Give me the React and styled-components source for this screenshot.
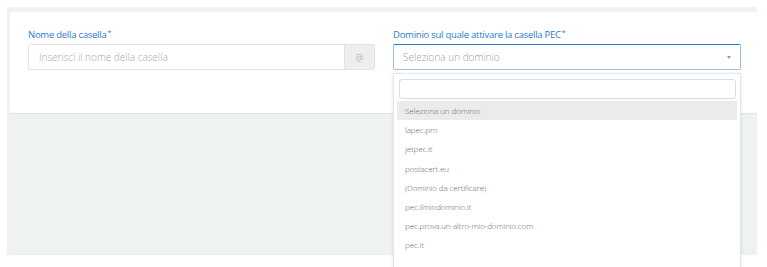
import React from "react";
import styled, { createGlobalStyle } from "styled-components";

const Global = createGlobalStyle`
  html, body { margin: 0; padding: 0; background: #fff; }
  body { font-family: "Open Sans", "Liberation Sans", sans-serif; overflow: hidden; }
  * { box-sizing: border-box; }
`;

const Page = styled.div`
  padding: 7px 10px 0 7px;
  height: 267px;
  overflow: hidden;
`;

const Shell = styled.div`
  background: #eef2f3;
  height: 248px;
  padding: 5px 0 0 3px;
`;

const Card = styled.div`
  background: #fff;
  height: 101px;
  border-radius: 2px;
  box-shadow: 0 1px 1px rgba(0, 0, 0, 0.06);
  padding: 14px 16px 0 18px;
  display: grid;
  grid-template-columns: 347px 348px;
  column-gap: 18px;
  align-items: start;
`;

const Field = styled.div`
  position: relative;
  display: flex;
  flex-direction: column;
`;

const Label = styled.label`
  font-size: 9.5px;
  color: #2b7bd0;
  height: 14px;
  line-height: 14px;
  margin-bottom: 4px;
  letter-spacing: -0.25px;
  sup { font-size: 7px; vertical-align: 3px; margin-left: 1px; }
`;

const InputGroup = styled.div`
  display: flex;
  height: 26px;
  border: 1px solid #e3e3e3;
  border-radius: 2px;
  overflow: hidden;
`;

const TextInput = styled.input`
  flex: 1;
  border: none;
  outline: none;
  padding: 0 10px;
  font-family: inherit;
  font-size: 10px;
  font-weight: 300;
  color: #555;
  &::placeholder { color: #a8a8a8; }
`;

const Addon = styled.span`
  width: 30px;
  background: #eeeeee;
  border-left: 1px solid #e3e3e3;
  display: flex;
  align-items: center;
  justify-content: center;
  font-size: 9px;
  font-weight: 300;
  color: #999;
`;

const SelectBox = styled.div`
  height: 26px;
  border: 1px solid #9ec0e6;
  border-top-color: #2b78cf;
  border-radius: 2px;
  display: flex;
  align-items: center;
  justify-content: space-between;
  padding: 0 9px 0 9px;
  font-size: 10px;
  font-weight: 300;
  color: #a0a0a0;
`;

const Caret = styled.span`
  width: 0;
  height: 0;
  border-left: 2.5px solid transparent;
  border-right: 2.5px solid transparent;
  border-top: 3px solid #999;
  margin-top: 1px;
`;

const Dropdown = styled.div`
  position: absolute;
  top: calc(100% + 3px);
  left: 0;
  width: 348px;
  height: 200px;
  background: #fff;
  border: 1px solid #e6e6e6;
  box-shadow: 0 1px 3px rgba(0, 0, 0, 0.12);
  padding: 5px 3px 0 3px;
  z-index: 5;
`;

const Search = styled.div`
  height: 20px;
  margin: 0 1px 2px 2px;
  border: 1px solid #dcdcdc;
  border-radius: 3px;
`;

const Option = styled.div`
  height: 19.2px;
  line-height: 19.2px;
  padding-left: 8px;
  font-size: 8px;
  font-weight: 300;
  letter-spacing: -0.1px;
  color: ${(p) => (p.$active ? "#6a6a6a" : "#666")};
  background: ${(p) => (p.$active ? "#ebebeb" : "transparent")};
  border-radius: 1px;
`;

const options = [
  "lapec.pro",
  "jetpec.it",
  "postacert.eu",
  "(Dominio da certificare)",
  "pec.ilmiodominio.it",
  "pec.prova.un-altro-mio-dominio.com",
  "pec.it",
];

export default function App() {
  return (
    <>
      <Global />
      <Page>
        <Shell>
          <Card>
            <Field>
              <Label>
                Nome della casella<sup>*</sup>
              </Label>
              <InputGroup>
                <TextInput placeholder="Inserisci il nome della casella" />
                <Addon>@</Addon>
              </InputGroup>
            </Field>
            <Field>
              <Label>
                Dominio sul quale attivare la casella PEC<sup>*</sup>
              </Label>
              <SelectBox>
                <span>Seleziona un dominio</span>
                <Caret />
              </SelectBox>
              <Dropdown>
                <Search />
                <Option $active>Seleziona un dominio</Option>
                {options.map((o) => (
                  <Option key={o}>{o}</Option>
                ))}
              </Dropdown>
            </Field>
          </Card>
        </Shell>
      </Page>
    </>
  );
}
